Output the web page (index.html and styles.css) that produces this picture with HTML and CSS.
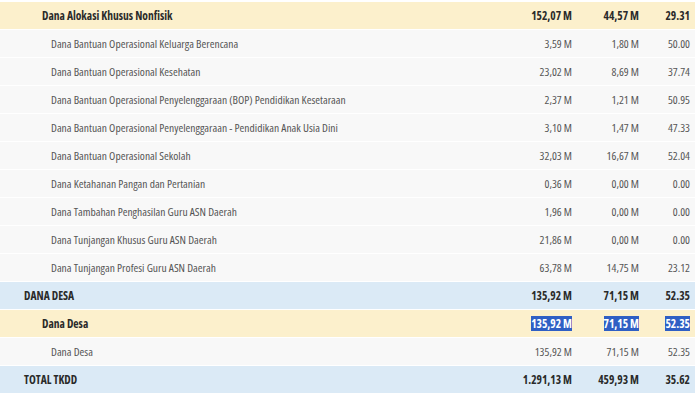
FILE: index.html
```html
<!DOCTYPE html>
<html>
<head>
<meta charset="utf-8">
<link rel="stylesheet" href="styles.css">
</head>
<body>
<table class="tkdd">
  <colgroup>
    <col class="c-label"><col class="c-num1"><col class="c-num2"><col class="c-num3">
  </colgroup>
  <tbody>
    <tr class="lvl2"><td class="label">Dana Alokasi Khusus Nonfisik</td><td>152,07 M</td><td>44,57 M</td><td>29.31</td></tr>
    <tr class="lvl3"><td class="label">Dana Bantuan Operasional Keluarga Berencana</td><td>3,59 M</td><td>1,80 M</td><td>50.00</td></tr>
    <tr class="lvl3"><td class="label">Dana Bantuan Operasional Kesehatan</td><td>23,02 M</td><td>8,69 M</td><td>37.74</td></tr>
    <tr class="lvl3"><td class="label">Dana Bantuan Operasional Penyelenggaraan (BOP) Pendidikan Kesetaraan</td><td>2,37 M</td><td>1,21 M</td><td>50.95</td></tr>
    <tr class="lvl3"><td class="label">Dana Bantuan Operasional Penyelenggaraan - Pendidikan Anak Usia Dini</td><td>3,10 M</td><td>1,47 M</td><td>47.33</td></tr>
    <tr class="lvl3"><td class="label">Dana Bantuan Operasional Sekolah</td><td>32,03 M</td><td>16,67 M</td><td>52.04</td></tr>
    <tr class="lvl3"><td class="label">Dana Ketahanan Pangan dan Pertanian</td><td>0,36 M</td><td>0,00 M</td><td>0.00</td></tr>
    <tr class="lvl3"><td class="label">Dana Tambahan Penghasilan Guru ASN Daerah</td><td>1,96 M</td><td>0,00 M</td><td>0.00</td></tr>
    <tr class="lvl3"><td class="label">Dana Tunjangan Khusus Guru ASN Daerah</td><td>21,86 M</td><td>0,00 M</td><td>0.00</td></tr>
    <tr class="lvl3"><td class="label">Dana Tunjangan Profesi Guru ASN Daerah</td><td>63,78 M</td><td>14,75 M</td><td>23.12</td></tr>
    <tr class="lvl1"><td class="label">DANA DESA</td><td>135,92 M</td><td>71,15 M</td><td>52.35</td></tr>
    <tr class="lvl2"><td class="label">Dana Desa</td><td><span class="sel">135,92 M</span></td><td><span class="sel">71,15 M</span></td><td><span class="sel">52.35</span></td></tr>
    <tr class="lvl3"><td class="label">Dana Desa</td><td>135,92 M</td><td>71,15 M</td><td>52.35</td></tr>
    <tr class="lvl1"><td class="label">TOTAL TKDD</td><td>1.291,13 M</td><td>459,93 M</td><td>35.62</td></tr>
  </tbody>
</table>
</body>
</html>
```
FILE: styles.css
```css
html, body {
  margin: 0;
  padding: 0;
  background: #ffffff;
}
body {
  padding-top: 2px;
  font-family: "Open Sans", sans-serif;
  font-stretch: 75%;
  font-size: 11.5px;
}
.tkdd {
  width: 695px;
  border-collapse: collapse;
  table-layout: fixed;
}
.c-label { width: 477px; }
.c-num1 { width: 100px; }
.c-num2 { width: 67px; }
.c-num3 { width: 51px; }
.tkdd td {
  height: 27px;
  padding: 0 5px 0 0;
  text-align: right;
  border-bottom: 1px solid #ffffff;
  white-space: nowrap;
  color: #555555;
}
.tkdd td.label {
  text-align: left;
}
.lvl1 td {
  background: #dbeaf6;
  font-weight: 700;
  color: #2a2a2a;
}
.lvl1 td.label { padding-left: 24px; }
.lvl2 td {
  background: #fcf0cc;
  font-weight: 700;
  color: #2a2a2a;
}
.lvl2 td.label { padding-left: 42px; }
.lvl3 td {
  background: #f8f8f8;
}
.lvl3 td.label { padding-left: 51px; }
.sel {
  background: #2f5fc4;
  color: #ffffff;
}
```
